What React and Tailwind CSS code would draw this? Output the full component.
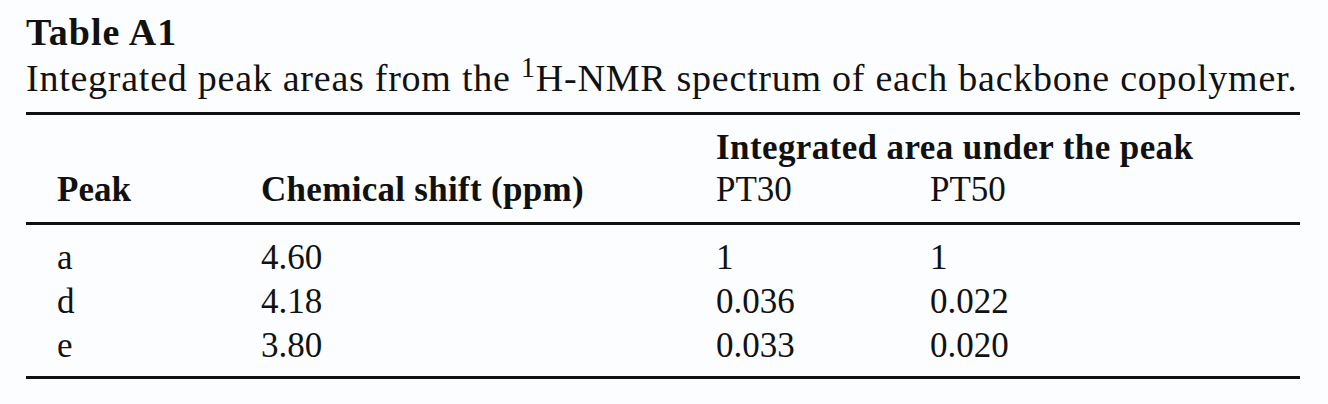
const rows = [
  { peak: "a", shift: "4.60", pt30: "1", pt50: "1" },
  { peak: "d", shift: "4.18", pt30: "0.036", pt50: "0.022" },
  { peak: "e", shift: "3.80", pt30: "0.033", pt50: "0.020" },
];

const cols = "grid grid-cols-[204px_455px_214px_1fr] pl-[31px]";

export default function App() {
  return (
    <div
      className="w-[1328px] h-[404px] bg-[#fcfdff] text-[#111] pl-[26px] pt-[9px]"
      style={{ fontFamily: '"Liberation Serif", "Times New Roman", serif' }}
    >
      <div className="text-[38px] leading-[46px] font-bold tracking-[1px]">Table A1</div>
      <div className="text-[38px] leading-[46px] tracking-[0.75px]">
        Integrated peak areas from the <sup>1</sup>H-NMR spectrum of each backbone copolymer.
      </div>

      <div className="w-[1274px] mt-[11px] border-t-[3px] border-[#111]">
        <div className="pt-[12px] pb-[11px] text-[35px]">
          <div className={`${cols} leading-[42px] font-bold tracking-[0.4px]`}>
            <div />
            <div />
            <div className="col-span-2">Integrated area under the peak</div>
          </div>
          <div className={`${cols} leading-[42px]`}>
            <div className="font-bold">Peak</div>
            <div className="font-bold tracking-[0.3px]">Chemical shift (ppm)</div>
            <div>PT30</div>
            <div>PT50</div>
          </div>
        </div>

        <div className="border-t-[3px] border-[#111] pt-[11px] pb-[8px] text-[35px]">
          {rows.map((r) => (
            <div key={r.peak} className={`${cols} leading-[44px]`}>
              <div>{r.peak}</div>
              <div>{r.shift}</div>
              <div>{r.pt30}</div>
              <div>{r.pt50}</div>
            </div>
          ))}
        </div>

        <div className="border-t-[3px] border-[#111]" />
      </div>
    </div>
  );
}
